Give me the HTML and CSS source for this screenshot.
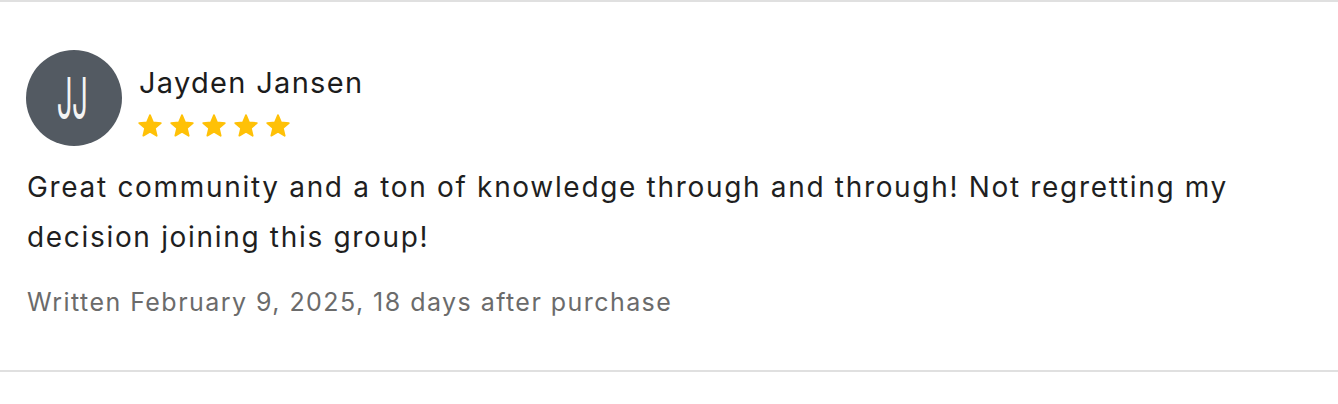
FILE: index.html
```html
<!DOCTYPE html>
<html>
<head>
<meta charset="utf-8">
<link rel="stylesheet" href="styles.css">
</head>
<body>
<div class="review">
  <div class="header">
    <div class="avatar"><span class="initials">JJ</span></div>
    <div class="who">
      <div class="name">Jayden Jansen</div>
      <div class="stars">
        <svg class="star" viewBox="0 0 24 24"><path d="M12 17.27L18.18 21l-1.64-7.03L22 9.24l-7.19-.61L12 2 9.19 8.63 2 9.24l5.46 4.73L5.82 21z"/></svg>
        <svg class="star" viewBox="0 0 24 24"><path d="M12 17.27L18.18 21l-1.64-7.03L22 9.24l-7.19-.61L12 2 9.19 8.63 2 9.24l5.46 4.73L5.82 21z"/></svg>
        <svg class="star" viewBox="0 0 24 24"><path d="M12 17.27L18.18 21l-1.64-7.03L22 9.24l-7.19-.61L12 2 9.19 8.63 2 9.24l5.46 4.73L5.82 21z"/></svg>
        <svg class="star" viewBox="0 0 24 24"><path d="M12 17.27L18.18 21l-1.64-7.03L22 9.24l-7.19-.61L12 2 9.19 8.63 2 9.24l5.46 4.73L5.82 21z"/></svg>
        <svg class="star" viewBox="0 0 24 24"><path d="M12 17.27L18.18 21l-1.64-7.03L22 9.24l-7.19-.61L12 2 9.19 8.63 2 9.24l5.46 4.73L5.82 21z"/></svg>
      </div>
    </div>
  </div>
  <p class="text">Great community and a ton of knowledge through and through! Not regretting my decision joining this group!</p>
  <p class="meta">Written February 9, 2025, 18 days after purchase</p>
</div>
</body>
</html>
```
FILE: styles.css
```css
html, body {
  margin: 0;
  padding: 0;
  background: #ffffff;
}
body {
  font-family: Inter, "Noto Sans", sans-serif;
  color: #1f1f1f;
}
.review {
  border-top: 2px solid #e0e0e0;
  border-bottom: 2px solid #e0e0e0;
  padding: 48px 26px 0 27px;
  height: 320px;
}
.header {
  display: flex;
  align-items: flex-start;
  gap: 17px;
  margin-left: -1px;
}
.avatar {
  width: 96px;
  height: 96px;
  border-radius: 50%;
  background: #535a62;
  display: flex;
  align-items: center;
  justify-content: center;
  flex-shrink: 0;
}
.initials {
  display: block;
  color: #f4f4f4;
  font-size: 58px;
  line-height: 58px;
  font-weight: 400;
  letter-spacing: -1px;
  transform: scaleX(0.48);
  margin-left: -3px;
  margin-top: -1px;
}
.who {
  display: flex;
  flex-direction: column;
  gap: 13px;
  margin-top: 16px;
}
.name {
  font-size: 29px;
  line-height: 34px;
  letter-spacing: 0.045em;
  color: #1c1c1c;
}
.stars {
  display: flex;
  gap: 6px;
  margin-left: -2px;
}
.star {
  width: 26px;
  height: 26px;
  fill: #ffc107;
  stroke: #ffc107;
  stroke-width: 1.6;
  stroke-linejoin: round;
}
.text {
  margin: 16px 0 0 0;
  font-size: 28px;
  line-height: 50px;
  letter-spacing: 0.06em;
  color: #1f1f1f;
  max-width: 1240px;
}
.meta {
  margin: 20px 0 0 0;
  font-size: 25px;
  line-height: 40px;
  letter-spacing: 0.058em;
  color: #6b6b6b;
}
```
